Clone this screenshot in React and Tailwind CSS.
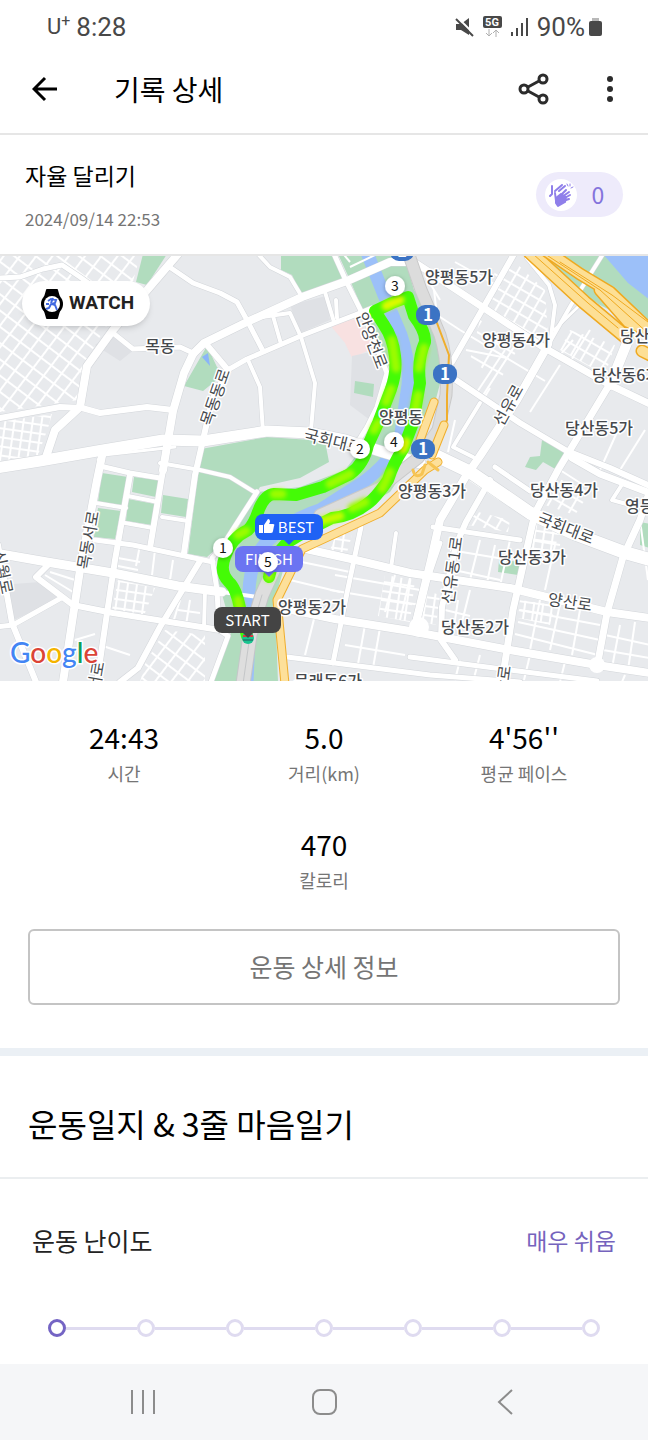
import { Fragment } from 'react'

const SANS = "font-['Noto_Sans_CJK_KR','Noto_Sans',sans-serif]"

// ── Map data ────────────────────────────────────────────────────────────────
// [width, points]
const ROADS = [
  [5, '0,278 20,277 43,269 62,265 80,277 112,300'],
  [8, '178,254 113,330 87,366 80,407 55,430 45,460'],
  [6, '0,418 60,407 82,408 100,413 147,407 173,410'],
  [5, '168,266 193,283 220,293 237,302 248,322 263,351'],
  [5, '113,333 133,349 180,347 193,353'],
  [8, '193,354 184,373 173,411 163,470'],
  [8, '193,354 204,343 247,322 302,297 347,281 390,262 406,262'],
  [6, '207,345 228,370 212,400 203,440 195,475 184,553'],
  [5, '226,371 247,359 303,335 360,313 372,308'],
  [4, '248,360 260,387 263,432'],
  [4, '273,316 281,344'],
  [4, '262,317 290,313 301,337 315,383 311,430'],
  [4, '258,254 270,267 290,277 302,297'],
  [5, '334,254 347,283 367,323 387,373 377,407 367,427 357,443'],
  [4, '325,292 334,322'],
  [4, '336,300 337,318'],
  [11, '-4,468 40,461 97,451 163,440 203,441 267,431 310,433 345,440 383,452 420,463'],
  [3, '98,460 104,455 175,447'],
  [8, '102,456 97,480 80,570 63,682'],
  [6, '130,475 115,560 107,613 97,682'],
  [6, '165,458 150,548'],
  [5, '100,466 130,473 160,478'],
  [4, '160,463 200,470 230,477 256,493'],
  [4, '96,503 126,508'],
  [4, '128,496 158,502'],
  [4, '125,523 153,528'],
  [4, '162,517 188,521'],
  [5, '95,540 133,545 213,562'],
  [9, '-4,553 47,562 113,573 178,586 222,592'],
  [6, '50,563 36,577 73,605 113,613 220,630'],
  [5, '-4,627 13,625 63,597'],
  [6, '-2,545 12,623 36,682'],
  [6, '200,561 160,627 138,668 120,682'],
  [4, '205,590 204,628'],
  [5, '257,492 223,545 212,558 217,590 219,630 228,636 211,682'],
  [6, '514,254 482,310 452,362 448,366'],
  [7, '408,258 440,279 543,347 610,385 650,404'],
  [8, '547,347 517,400 480,456 466,476 440,520 431,560 423,593 415,627'],
  [6, '450,376 520,423 567,451 610,468 650,486'],
  [7, '608,387 558,470 535,513 513,610 502,682'],
  [10, '627,343 610,385'],
  [4, '527,258 549,285 555,305 550,345'],
  [4, '551,340 571,305 603,254'],
  [3, '554,330 580,305 600,318'],
  [4, '480,403 453,447 473,457'],
  [6, '490,480 466,522 456,545 442,607 441,640 455,660'],
  [5, '433,527 520,540'],
  [8, '306,549 360,561 410,573 510,588 607,612 650,618'],
  [8, '277,607 335,619 410,631 510,650 597,665 650,673'],
  [5, '287,657 430,675 520,682'],
  [5, '410,657 510,670 597,681'],
  [5, '361,527 347,593 333,663'],
  [4, '396,533 391,568'],
  [5, '440,543 423,593 412,632'],
  [7, '572,458 600,474 650,493'],
  [4, '623,483 612,500 630,505'],
  [7, '649,493 640,520 623,557 607,613 597,667'],
  [13, '420,448 470,472 530,513 575,534 623,552 652,560'],
  [5, '495,467 530,491'],
]

const MINOR = [
  '434,290 437,315 460,330', '455,262 500,287', '425,275 440,300', '466,350 507,358',
  '560,470 585,486', '455,420 448,452', '505,350 475,395', '525,330 480,400',
  '560,365 530,412', '460,330 545,381', '490,388 472,418', '590,330 570,362',
  '573,340 560,355', '618,430 600,470', '335,575 420,590', '330,590 420,605',
  '395,575 385,612', '410,578 400,620', '292,560 350,572', '290,580 340,592',
  '315,615 305,655', '365,625 358,664', '345,645 405,655', '380,628 373,668',
  '470,480 500,500', '480,540 470,580', '495,545 487,583', '510,540 500,586',
  '445,568 500,580', '450,550 510,560', '530,540 560,545', '555,545 545,590',
  '520,610 600,625', '518,622 600,640', '515,634 598,655', '560,604 550,650',
  '580,610 572,655', '540,600 530,650', '620,625 612,668', '635,622 628,670',
  '605,635 650,645', '603,650 650,658', '640,520 648,580', '645,430 620,470',
  '458,600 452,640', '470,590 462,622', '445,610 470,616', '460,660 455,680',
  '480,655 474,678', '530,655 524,680', '565,662 560,682', '625,675 622,682',
  '180,600 172,626', '190,600 186,625', '178,610 200,613', '140,545 136,566',
  '155,550 152,575', '173,560 170,580', '118,558 140,562', '118,566 138,570',
  '50,572 75,580', '45,575 73,592', '100,645 130,655', '75,640 95,634',
  '340,250 350,262', '375,255 350,267',
]

// [pattern, polygon]
const BLOCKS = [
  ['lanesA', '0,256 140,256 132,285 95,345 82,372 78,400 0,412'],
  ['lanesB', '0,422 52,414 48,428 38,455 0,461'],
  ['lanesB', '118,580 155,588 143,618 112,610'],
  ['lanesA', '165,630 205,635 205,682 140,682 145,664'],
  ['lanesC', '495,270 515,262 545,290 548,335 540,340 488,308'],
  ['lanesD', '480,320 520,345 500,380 470,360'],
  ['lanesB', '385,575 415,580 410,622 378,616'],
  ['lanesC', '570,330 615,345 605,375 560,350'],
  ['lanesB', '520,600 555,605 550,625 518,618'],
  ['lanesB', '424,590 440,595 436,625 420,622'],
  ['lanesC', '550,475 590,492 575,515 545,505'],
  ['lanesB', '535,520 560,530 553,555 530,550'],
  ['lanesC', '470,510 510,520 508,532 462,524'],
  ['lanesB', '337,532 352,535 346,556 330,550'],
]

const PARKS = [
  '143,254 167,254 147,285 136,282',
  '207,346 217,367 224,374 203,391 184,386',
  '281,254 333,254 344,280 302,296 292,275 281,270',
  '338,254 404,254 414,290 438,330 441,380 425,440 390,492 340,520 290,545 275,600 278,682 212,682 232,630 218,580 222,556 258,492 300,487 345,470 368,440 392,373 366,318 350,280',
  '201,449 267,437 325,441 329,462 300,478 260,487 222,544 207,557 188,554',
  '102,473 128,477 123,505 98,502',
  '134,477 159,480 156,497 132,492',
  '128,499 155,504 152,525 126,521',
  '98,508 121,511 115,539 94,537',
  '163,495 188,499 186,517 161,513',
  '355,381 374,384 373,397 354,393',
  '542,440 565,452 557,470 543,462 536,470 525,467 530,457 540,456',
  '499,560 522,562 518,575 498,572',
  '640,522 650,524 650,548 640,545',
  '545,254 604,254 650,300 650,330 600,305 572,286',
]

const ROUTE =
  'M247,636 L240,608 Q236,588 229,582 Q219,572 225,557 Q231,538 248,530 Q254,524 258,512 Q264,495 274,494 L296,495 L323,487 L350,474 Q364,464 368,445 L378,423 Q386,402 391,389 Q397,372 395,356 Q393,338 384,325 L375,311 L392,303 L408,297 L414,316 Q426,332 425,342 Q417,360 420,383 L413,423 L403,449 Q393,464 388,480 Q380,492 372,500 Q354,516 332,518 Q308,530 288,542 Q273,556 269,577'

const LABELS = [
  [160, 346, '목동'], [459, 277, '양평동5가'], [516, 340, '양평동4가'],
  [642, 336, '당산동'], [626, 375, '당산동6가'], [599, 428, '당산동5가'],
  [564, 490, '당산동4가'], [647, 506, '영등포'], [401, 417, '양평동'],
  [432, 491, '양평동3가'], [532, 557, '당산동3가'], [475, 627, '당산동2가'],
  [312, 607, '양평동2가'], [328, 681, '문래동6가'], [432, 691, '문'],
]

// [x, y, angle, name]
const STREETS = [
  [215, 397, -71, '목동동로'], [88, 540, -80, '목동서로'], [372, 340, 69, '안양천로'],
  [333, 441, 14, '국회대로'], [508, 405, -61, '선유로'], [566, 528, 21, '국회대로'],
  [570, 602, 8, '양산로'], [452, 570, -82, '선유동1로'], [3, 572, 78, '신월로'],
  [96, 676, -80, '서로'], [503, 680, -82, '산로'],
]

const KM = [[223, 548, 1], [360, 449, 2], [395, 286, 3], [394, 442, 4], [268, 562, 5]]
const SHIELDS = [[402, 251], [428, 315], [445, 374], [423, 449]]

function Lanes({ id, size, angle }) {
  return (
    <pattern id={id} width={size} height={size} patternUnits="userSpaceOnUse" patternTransform={`rotate(${angle})`}>
      <path d={`M0,1 H${size} M1,0 V${size}`} stroke="#fff" strokeWidth="2" />
    </pattern>
  )
}

function Pin({ x, y, width, color, label, tip, icon }) {
  return (
    <g>
      <rect x={x} y={y} width={width} height="26" rx="8" fill={color} />
      <path d={`M${tip - 6},${y + 25} h12 l-6,6 z`} fill={color} />
      {icon && (
        <path
          transform={`translate(${x + 4} ${y + 5})`}
          d="M0,6 h4 v8 h-4 z M5,6 L9,0 q2,0 2,3 l-1,2 h4 q2,0 1,2 l-1,5 q0,2 -2,2 h-7 z"
          fill="#fff"
        />
      )}
      <text
        x={icon ? x + 41 : x + width / 2}
        y={y + 19}
        textAnchor="middle"
        fontSize="15"
        fill="#fff"
      >
        {label}
      </text>
    </g>
  )
}

function RouteMap() {
  return (
    <svg
      viewBox="0 256 648 425"
      preserveAspectRatio="xMidYMid slice"
      className={`block h-[425px] w-full bg-[#e8eaed] ${SANS}`}
      role="img"
      aria-label="달리기 경로 지도"
    >
      <defs>
        <Lanes id="lanesA" size={13} angle={37} />
        <Lanes id="lanesB" size={9} angle={8} />
        <Lanes id="lanesC" size={11} angle={30} />
        <Lanes id="lanesD" size={24} angle={30} />
        <filter id="lift" x="-50%" y="-50%" width="200%" height="200%">
          <feDropShadow dx="0" dy="1" stdDeviation="2" floodOpacity="0.3" />
        </filter>
        <filter id="blend">
          <feGaussianBlur stdDeviation="2" />
        </filter>
      </defs>

      {/* Terrain */}
      <polygon points="330,325 358,318 374,348 352,358 345,343" fill="#f8e1e1" />
      <polygon points="352,356 380,350 385,373 370,420 350,405" fill="#dfe1e5" />
      <polygon points="290,305 326,296 330,320 300,333" fill="#dfe1e5" />
      <polygon points="95,345 113,333 135,349 120,361" fill="#dfe1e5" />
      <polygon points="0,585 40,582 62,597 14,620" fill="#dfe1e5" />
      {BLOCKS.map(([pattern, points]) => (
        <polygon key={points} points={points} fill={`url(#${pattern})`} />
      ))}
      {PARKS.map((points) => (
        <polygon key={points} points={points} fill="#b1dcbe" />
      ))}
      <polygon points="603,254 650,254 650,300 628,283" fill="#9cc0f9" />
      <polygon points="202,357 208,353 210,366" fill="#8ab4f8" />

      {/* River */}
      <path
        d="M366,250 L384,295 L401,335 Q410,362 408,385 L400,440 Q390,463 362,483 L320,510 Q275,525 257,555 Q246,580 250,610 L247,682"
        fill="none"
        stroke="#9cc0f9"
        strokeWidth="13"
      />

      {/* Streets */}
      <g fill="none" stroke="#fff" strokeWidth="2">
        {MINOR.map((points) => (
          <polyline key={points} points={points} />
        ))}
      </g>
      <g fill="none" strokeLinejoin="round" strokeLinecap="round">
        {ROADS.map(([width, points]) => (
          <polyline key={points} points={points} stroke="#d3d6da" strokeWidth={width + 1} />
        ))}
        {ROADS.map(([width, points]) => (
          <polyline key={points} points={points} stroke="#fff" strokeWidth={width} />
        ))}
      </g>
      <circle cx="419" cy="627" r="10" fill="#fff" />
      <circle cx="597" cy="665" r="8" fill="#fff" />
      <polyline points="222,592 265,598" stroke="#fff" strokeWidth="4" />

      {/* Expressways */}
      <g fill="none" strokeLinejoin="round" strokeLinecap="round">
        <path d="M408,252 L421,290 L440,335 Q448,360 446,395 L438,430 L418,458 L380,488 L320,515" stroke="#c9c9c9" strokeWidth="13" />
        <path d="M408,252 L421,290 L440,335 Q448,360 446,395 L438,430 L418,458 L380,488 L320,515" stroke="#dcdcdc" strokeWidth="11" />
        <path d="M278,560 L262,595 L250,635 L243,684" stroke="#c4c6c8" strokeWidth="15" />
        <path d="M278,560 L262,595 L250,635 L243,684" stroke="#dedede" strokeWidth="13" />
        <path d="M262,595 L250,635 L243,684" stroke="#c4c6c8" />
        <path d="M437,323 L449,355 L447,395 L447,420 L434,448" stroke="#f0ae2c" strokeWidth="2" />
        <path d="M434,402 L420,440 M444,425 L432,455 M438,462 L425,470 L380,513 L302,549 L277,600 L285,684" stroke="#f0ae2c" strokeWidth="9" />
        <path d="M434,402 L420,440 M444,425 L432,455 M438,462 L425,470 L380,513 L302,549 L277,600 L285,684" stroke="#fde09a" strokeWidth="7" />
        <path d="M413,470 q2,9 9,4 l3,-9 M428,462 l10,8" stroke="#f6c453" strokeWidth="3" />
        <path d="M530,252 L584,302 L626,337" stroke="#efa920" strokeWidth="15" />
        <path d="M530,252 L584,302 L626,337" stroke="#fddf95" strokeWidth="12" />
        <path d="M545,250 L580,274 L610,292 L652,332 M600,290 L628,322 L652,332 M642,351 L652,356" stroke="#efa920" strokeWidth="13" />
        <path d="M545,250 L580,274 L610,292 L652,332 M600,290 L628,322 L652,332 M642,351 L652,356" stroke="#fddf95" strokeWidth="10" />
        <path d="M533,254 L588,303 L618,328 M545,254 L600,290 L650,335 M560,262 L612,295 L652,325" stroke="#efa920" />
      </g>

      {/* Route */}
      <g fill="none" strokeLinecap="round" strokeLinejoin="round">
        <path d={ROUTE} stroke="#44fb06" strokeWidth="12" />
        <g filter="url(#blend)" stroke="#9cfc04" strokeWidth="9">
          <path d="M240,610 L238,600 M246,531 L238,535 M274,494 L282,494 M330,484 L350,474 M374,430 L378,423 M386,402 L391,389 M396,368 L392,340 M424,348 L419,368 M418,395 L414,415 M390,472 L382,489 M352,508 L365,502 M270,571 L269,577" />
          <path d="M322,521 L340,516" stroke="#c4fc04" />
          <path d="M386,306 L400,300" stroke="#ddfa05" />
          <path d="M403,449 L406,442" stroke="#ddfa05" />
        </g>
      </g>
      <circle cx="248" cy="638" r="6" fill="#19c48f" />
      <path d="M243,636 h10" stroke="#e0383e" strokeWidth="2" />
      <path d="M243,640 h10" stroke="#24545c" />

      {/* Place names */}
      <g fill="#46494d" stroke="#fff" strokeWidth="3" strokeLinejoin="round" paintOrder="stroke" textAnchor="middle">
        {LABELS.map(([x, y, name]) => (
          <text key={name} x={x} y={y + 6} fontSize="16" fontWeight="500">{name}</text>
        ))}
        {STREETS.map(([x, y, angle, name]) => (
          <text key={`${name}${x}`} transform={`translate(${x} ${y}) rotate(${angle})`} y="6" fontSize="16">
            {name}
          </text>
        ))}
      </g>
      {SHIELDS.map(([x, y]) => (
        <g key={y}>
          <rect x={x - 12} y={y - 10} width="24" height="20" rx="9" fill="#3b73c4" />
          <text x={x} y={y + 6} textAnchor="middle" fontSize="17" fontWeight="700" fill="#fff">1</text>
        </g>
      ))}

      {/* Pins */}
      <Pin x={255} y={514} width={68} color="#1f62f5" label="BEST" tip={289} icon />
      <Pin x={235} y={546} width={68} color="#6b74f2" label="FINISH" tip={269} />
      <Pin x={214} y={607} width={67} color="#444" label="START" tip={248} />
      {KM.map(([x, y, km]) => (
        <g key={km}>
          <circle cx={x} cy={y} r="10" fill="#fff" filter="url(#lift)" />
          <text x={x} y={y + 5} textAnchor="middle" fontSize="14" fill="#111">{km}</text>
        </g>
      ))}

      <text
        x="10"
        y="663"
        className="font-['Lato',sans-serif]"
        fontSize="28"
        fontWeight="500"
        stroke="#fff"
        strokeWidth="3"
        paintOrder="stroke"
      >
        <tspan fill="#4285f4">G</tspan>
        <tspan fill="#db4437">o</tspan>
        <tspan fill="#f4b400">o</tspan>
        <tspan fill="#4285f4">g</tspan>
        <tspan fill="#0f9d58">l</tspan>
        <tspan fill="#db4437">e</tspan>
      </text>
    </svg>
  )
}

// ── Phone chrome ────────────────────────────────────────────────────────────
function StatusBar() {
  return (
    <div className="flex h-[54px] items-center justify-between pr-[46px] pl-[47px] font-['Roboto',sans-serif] text-[26px] text-[#484848]">
      <div className="flex items-center gap-[6px]">
        <span className="flex items-start">
          <span className="text-[22px] leading-6">U</span>
          <span className="text-base leading-3">+</span>
        </span>
        <span>8:28</span>
      </div>
      <div className="flex items-center gap-2">
        <svg className="h-5 w-5" viewBox="0 0 20 20" fill="#484848">
          <path d="M1,7 h5 l8,-6 v17 l-8,-5 h-5 z" />
          <path d="M3,1 L20,18" stroke="#fff" strokeWidth="2" />
          <path d="M1,2 L18,19" stroke="#484848" strokeWidth="2" />
        </svg>
        <svg className="h-[22px] w-5" viewBox="0 0 20 22">
          <rect x="0" y="0" width="19" height="12" rx="2" fill="#484848" />
          <text x="9" y="10" textAnchor="middle" fontSize="11" fontWeight="700" fill="#fff">5G</text>
          <path d="M6,13 v7 m-3,-3 l3,3 l3,-3 M13,21 v-7 m-3,3 l3,-3 l3,3" fill="none" stroke="#b0b0b0" />
        </svg>
        <svg className="h-[18px] w-[18px]" viewBox="0 0 18 18" stroke="#484848" strokeWidth="2">
          <path d="M1,14 v4 M6,10 v8 M11,5 v13 M16,0 v18" />
        </svg>
        <span className="flex items-center gap-1">
          90%
          <svg className="h-[18px] w-[13px]" viewBox="0 0 13 18">
            <path d="M3,0 h7 v3 h-7 z" fill="#b8b8b8" />
            <rect x="0" y="3" width="13" height="15" rx="2" fill="#484848" />
          </svg>
        </span>
      </div>
    </div>
  )
}

function Header() {
  return (
    <header className="flex h-[81px] items-center border-b-2 border-[#e6e6e6] pr-[26px] pb-[10px] pl-8">
      <button aria-label="뒤로" className="mr-14 w-[26px]">
        <svg className="h-[26px] w-[26px]" viewBox="0 0 26 26" fill="none" stroke="#000" strokeWidth="3">
          <path d="M25,13 H2 M13,2 L2,13 L13,24" />
        </svg>
      </button>
      <h1 className="flex-1 text-[28px] text-black">기록 상세</h1>
      <button aria-label="공유" className="mr-12">
        <svg className="h-8 w-8" viewBox="0 0 32 32" fill="none" stroke="#2c2c2c" strokeWidth="3">
          <circle cx="6" cy="16" r="4" />
          <circle cx="25" cy="6" r="4" />
          <circle cx="25" cy="26" r="4" />
          <path d="M10,14 L21,8 M10,18 L21,24" />
        </svg>
      </button>
      <button aria-label="더보기" className="w-6">
        <svg className="h-8 w-6" viewBox="0 0 24 32" fill="#2c2c2c">
          <circle cx="12" cy="6" r="3" />
          <circle cx="12" cy="16" r="3" />
          <circle cx="12" cy="26" r="3" />
        </svg>
      </button>
    </header>
  )
}

function ClapIcon() {
  return (
    <svg className="h-[26px] w-[26px]" viewBox="0 0 26 26" fill="none" stroke="#8f7fea" strokeLinecap="round" strokeLinejoin="round">
      <path d="M4,4 V12 L2,14 M7,9 L14,3 M11,9 L17,4" strokeWidth="2" />
      <path d="M8,16 L13,12 L18,15 L17,20 L10,24 L8,21 Z" fill="#8f7fea" strokeWidth="2" />
      <path d="M7,11 L8,19 M12,14 L18,8 M14,15 L21,10 M15,17 L22,13 M15,19 L21,17" strokeWidth="2" />
      <path d="M19,2 l1,2 M22,2 v2 M25,5 l-2,1" />
    </svg>
  )
}

function Summary() {
  return (
    <section className="flex h-[121px] items-center justify-between border-b-2 border-[#e6e6e6] px-[25px]">
      <div>
        <h2 className="text-[23px] leading-8 text-black">자율 달리기</h2>
        <p className="mt-4 text-[17px] leading-6 text-[#757575]">2024/09/14 22:53</p>
      </div>
      <button aria-label="박수 0" className="flex h-[45px] w-[87px] items-center rounded-full bg-[#eeebfb] pl-[9px]">
        <span className="flex h-8 w-8 items-center justify-center rounded-full bg-white">
          <ClapIcon />
        </span>
        <span className="flex-1 pr-1 text-[23px] text-[#8473dc]">0</span>
      </button>
    </section>
  )
}

function WatchBadge() {
  return (
    <div className="absolute top-[25px] left-[22px] flex h-[45px] w-32 items-center gap-[5px] rounded-full bg-white pl-[18px] shadow-md">
      <svg className="h-[30px] w-6" viewBox="0 0 24 30">
        <path d="M6,1 Q6,0 7,0 h10 Q18,0 18,1 l2,7 v14 l-2,7 Q18,30 17,30 h-10 Q6,30 6,29 l-2,-7 v-14 z" fill="#000" />
        <circle cx="12" cy="15" r="11" fill="#000" />
        <circle cx="12" cy="15" r="8" fill="#fff" />
        <path d="M8,12 l3,-2 l5,1 l-1,3 l-4,1 l-2,4 l-3,1 M12,15 l3,1 l2,5 M6,15 h3 M13,9 l-2,5" fill="none" stroke="#4169e1" strokeWidth="2" />
      </svg>
      <span className="font-['Roboto',sans-serif] text-[19px] font-bold text-[#222]">WATCH</span>
    </div>
  )
}

// ── Record ──────────────────────────────────────────────────────────────────
const stats = [
  { value: '24:43', label: '시간' },
  { value: '5.0', label: '거리(km)' },
  { value: "4'56''", label: '평균 페이스' },
  { value: '470', label: '칼로리', className: 'col-start-2' },
]

function Stats() {
  return (
    <dl className="grid grid-cols-3 gap-y-[35px] px-6 pt-9 text-center">
      {stats.map(({ value, label, className = '' }) => (
        <div key={label} className={`flex flex-col-reverse ${className}`}>
          <dt className="text-lg leading-8 text-[#757575]">{label}</dt>
          <dd className="text-[28px] leading-10 text-black">{value}</dd>
        </div>
      ))}
    </dl>
  )
}

const levels = ['매우 쉬움', '쉬움', '조금 쉬움', '보통', '조금 어려움', '어려움', '매우 어려움']

function Difficulty() {
  return (
    <section className="pt-[41px] pb-[27px]">
      <div className="flex items-center justify-between px-8 leading-10">
        <h3 id="difficulty" className="text-[25px] text-[#222]">운동 난이도</h3>
        <span className="text-[23px] text-[#7563bd]">{levels[0]}</span>
      </div>
      <div role="radiogroup" aria-labelledby="difficulty" className="mt-[59px] flex items-center px-12">
        {levels.map((level, i) => (
          <Fragment key={level}>
            {i > 0 && <span className="h-[3px] flex-1 bg-[#dfdbf0]" />}
            <input
              type="radio"
              name="difficulty"
              aria-label={level}
              defaultChecked={i === 0}
              className="h-[18px] w-[18px] shrink-0 appearance-none rounded-full border-3 border-[#dfdbf0] bg-white checked:border-[#7464c4]"
            />
          </Fragment>
        ))}
      </div>
    </section>
  )
}

function NavBar() {
  return (
    <nav className="grid h-[76px] grid-cols-3 items-center justify-items-center bg-[#f5f6f8] px-[52px]">
      <button aria-label="최근 앱">
        <svg className="h-[26px] w-6" viewBox="0 0 24 26" stroke="#8c8c8c" strokeWidth="2">
          <path d="M1,1 V25 M12,1 V25 M23,1 V25" />
        </svg>
      </button>
      <button aria-label="홈">
        <svg className="h-[26px] w-[26px]" viewBox="0 0 26 26" fill="none" stroke="#8c8c8c" strokeWidth="2">
          <rect x="2" y="1" width="23" height="24" rx="7" />
        </svg>
      </button>
      <button aria-label="이전">
        <svg className="h-[26px] w-4" viewBox="0 0 16 26" fill="none" stroke="#8c8c8c" strokeWidth="2">
          <path d="M15,1 L2,13 L15,25" />
        </svg>
      </button>
    </nav>
  )
}

export default function App() {
  return (
    <div className={`flex min-h-screen flex-col bg-white ${SANS}`}>
      <StatusBar />
      <Header />
      <main className="flex-1">
        <Summary />
        <div className="relative">
          <RouteMap />
          <WatchBadge />
        </div>
        <Stats />
        <div className="px-7 pt-[33px] pb-[43px]">
          <button className="h-[76px] w-full rounded-md border-2 border-[#c4c4c4] text-[25px] text-[#757575]">
            운동 상세 정보
          </button>
        </div>
        <h2 className="flex h-[131px] items-center border-t-8 border-b-2 border-t-[#ebf0f5] border-b-[#ebeef0] px-7 pt-3 text-[32px] text-black">
          운동일지 &amp; 3줄 마음일기
        </h2>
        <Difficulty />
      </main>
      <NavBar />
    </div>
  )
}
